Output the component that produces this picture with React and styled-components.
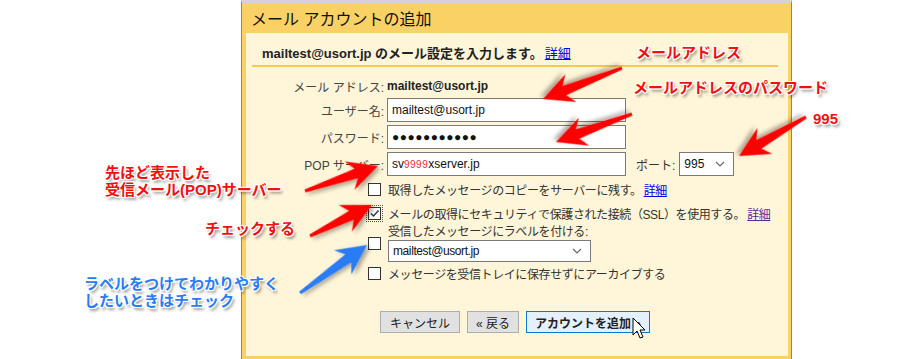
import React from 'react';
import styled, { createGlobalStyle } from 'styled-components';

const Global = createGlobalStyle`
  html, body { margin: 0; padding: 0; background: #fff; }
  body { font-family: "Liberation Sans", "Noto Sans CJK JP", sans-serif; }
`;

const Page = styled.div`
  position: relative;
  width: 924px;
  height: 359px;
  overflow: hidden;
  background: #fff;
`;

const Panel = styled.div`
  margin-left: 241px;
  width: 551px;
  height: 359px;
  box-sizing: border-box;
  border-left: 1px solid #8d8a62;
  border-right: 1px solid #8d8a62;
  border-top: 3px solid #d4d4d4;
  background: #f9d165;
  padding: 0 3px 3px 4px;
  display: flex;
  flex-direction: column;
`;

const Header = styled.div`
  height: 30px;
  display: flex;
  align-items: center;
  padding-left: 5px;
  font-size: 16px;
  color: #111;
`;

const Body = styled.div`
  flex: 1;
  background: #fff5d8;
  padding: 0 8px 0 6px;
`;

const Intro = styled.div`
  padding: 10px 0 0 10px;
  height: 22px;
  font-size: 13px;
  font-weight: bold;
  color: #222;
`;

const Link = styled.a`
  color: ${p => (p.$visited ? '#5b2a9a' : '#0000ee')};
  text-decoration: underline;
  font-weight: normal;
  margin-left: 2px;
  cursor: pointer;
`;

const Divider = styled.div`
  height: 2px;
  background: #f5c852;
  margin-right: 2px;
`;

const Form = styled.div`
  display: grid;
  grid-template-columns: 132px 1fr;
  column-gap: 3px;
  row-gap: 3px;
  margin-top: 10px;
  font-size: 12px;
  color: #333;
`;

const Label = styled.div`
  text-align: right;
  align-self: center;
  color: #444;
`;

const Value = styled.div`
  font-weight: bold;
  height: 18px;
  line-height: 18px;
  color: #222;
`;

const Field = styled.div`
  display: flex;
  align-items: center;
`;

const PortLabel = styled.span`
  margin: 0 4px 0 10px;
`;

const Input = styled.div`
  width: 239px;
  height: 24px;
  box-sizing: border-box;
  border: 1px solid #7a7a7a;
  background: #fff;
  display: flex;
  align-items: center;
  padding-left: 4px;
  font-size: 12px;
  color: #111;
  letter-spacing: ${p => (p.$dots ? '0.5px' : '0')};
`;

const Red = styled.span`
  color: #e8283a;
  font-size: 10px;
  letter-spacing: 0.5px;
`;

const Select = styled.div`
  width: ${p => p.$w}px;
  height: ${p => p.$h || 24}px;
  box-sizing: border-box;
  border: 1px solid #7a7a7a;
  background: #fff;
  display: flex;
  align-items: center;
  justify-content: space-between;
  padding: 0 8px 0 4px;
  font-size: 12px;
  color: #111;
`;

const Checks = styled.div`
  margin: 4px 0 0 116px;
  display: flex;
  flex-direction: column;
  font-size: 12px;
  color: #333;
  white-space: nowrap;
  letter-spacing: -0.4px;
`;

const CheckRow = styled.div`
  display: flex;
  align-items: center;
  gap: 7px;
  min-height: 18px;
  margin-top: ${p => p.$mt || 0}px;
`;

const Box = styled.span`
  flex: none;
  width: 13px;
  height: 13px;
  box-sizing: border-box;
  border: 1px solid #333;
  background: #fff;
  display: flex;
  align-items: center;
  justify-content: center;
  outline: ${p => (p.$checked ? '1px dotted #555' : 'none')};
  outline-offset: 1px;
`;

const Stack = styled.div`
  display: flex;
  flex-direction: column;
  line-height: 15px;
`;

const Buttons = styled.div`
  display: flex;
  gap: 7px;
  margin: 29px 0 0 128px;
`;

const Button = styled.div`
  height: 22px;
  box-sizing: border-box;
  padding: 0 ${p => p.$px || 10}px;
  display: flex;
  align-items: center;
  font-size: 12px;
  color: #222;
  border: 1px solid ${p => (p.$primary ? '#0a78d4' : '#adadad')};
  background: ${p => (p.$primary ? '#e4f0fb' : '#e1e1e1')};
  font-weight: ${p => (p.$primary ? 'bold' : 'normal')};
`;

const Note = styled.div`
  position: absolute;
  left: ${p => p.$x}px;
  top: ${p => p.$y}px;
  font-size: 15px;
  font-weight: bold;
  line-height: 17px;
  white-space: nowrap;
  color: ${p => (p.$blue ? '#2a7cf5' : '#f01010')};
  text-shadow: 1px 0 0 #fff, -1px 0 0 #fff, 0 1px 0 #fff, 0 -1px 0 #fff,
    1px 1px 0 #fff, -1px -1px 0 #fff, 1px -1px 0 #fff, -1px 1px 0 #fff,
    2px 3px 3px rgba(0, 0, 0, 0.45);
`;

const Overlay = styled.svg`
  position: absolute;
  left: 0;
  top: 0;
  width: 924px;
  height: 359px;
  pointer-events: none;
`;

const Chevron = () => (
  <svg width="10" height="6" viewBox="0 0 10 6">
    <path d="M1 1l4 4 4-4" fill="none" stroke="#666" strokeWidth="1.2" />
  </svg>
);

const Check = () => (
  <svg width="11" height="11" viewBox="0 0 11 11">
    <path d="M2 5.5l2.5 2.5L9.5 2.5" fill="none" stroke="#333" strokeWidth="1.4" />
  </svg>
);

// tapered arrow from tail (x1,y1) to tip (x2,y2)
const Arrow = ({ x1, y1, x2, y2, color }) => {
  const L = Math.hypot(x2 - x1, y2 - y1);
  const a = (Math.atan2(y2 - y1, x2 - x1) * 180) / Math.PI;
  const h = 30;
  const pts = [
    [0, -1.5], [L - h + 7, -5], [L - h, -15], [L, 0],
    [L - h, 15], [L - h + 7, 5], [0, 1.5],
  ].map(p => p.join(',')).join(' ');
  return (
    <polygon
      points={pts}
      fill={color}
      transform={`translate(${x1} ${y1}) rotate(${a})`}
      filter="url(#shadow)"
    />
  );
};

const arrows = [
  { x1: 622, y1: 68, x2: 543, y2: 99, color: '#ff0000' },
  { x1: 632, y1: 114, x2: 556, y2: 142, color: '#ff0000' },
  { x1: 806, y1: 117, x2: 739, y2: 156, color: '#ff0000' },
  { x1: 305, y1: 191, x2: 378, y2: 166, color: '#ff0000' },
  { x1: 310, y1: 236, x2: 372, y2: 205, color: '#ff0000' },
  { x1: 300, y1: 293, x2: 367, y2: 245, color: '#2a7cf5' },
];

export default function App() {
  return (
    <Page>
      <Global />
      <Panel>
        <Header>メール アカウントの追加</Header>
        <Body>
          <Intro>
            mailtest@usort.jp のメール設定を入力します。<Link>詳細</Link>
          </Intro>
          <Divider />
          <Form>
            <Label>メール アドレス:</Label>
            <Value>mailtest@usort.jp</Value>
            <Label>ユーザー名:</Label>
            <Input>mailtest@usort.jp</Input>
            <Label>パスワード:</Label>
            <Input $dots>●●●●●●●●●●●</Input>
            <Label>POP サーバー:</Label>
            <Field>
              <Input>
                sv<Red>9999</Red>xserver.jp
              </Input>
              <PortLabel>ポート:</PortLabel>
              <Select $w={55}>
                995 <Chevron />
              </Select>
            </Field>
          </Form>
          <Checks>
            <CheckRow>
              <Box />
              <span>
                取得したメッセージのコピーをサーバーに残す。<Link>詳細</Link>
              </span>
            </CheckRow>
            <CheckRow $mt={6}>
              <Box $checked>
                <Check />
              </Box>
              <span>
                メールの取得にセキュリティで保護された接続（SSL）を使用する。<Link $visited>詳細</Link>
              </span>
            </CheckRow>
            <CheckRow $mt={3}>
              <Box />
              <Stack>
                <span>受信したメッセージにラベルを付ける:</span>
                <Select $w={203} $h={22}>
                  mailtest@usort.jp <Chevron />
                </Select>
              </Stack>
            </CheckRow>
            <CheckRow $mt={2}>
              <Box />
              <span>メッセージを受信トレイに保存せずにアーカイブする</span>
            </CheckRow>
          </Checks>
          <Buttons>
            <Button $px={9}>キャンセル</Button>
            <Button $px={8}>« 戻る</Button>
            <Button $primary $px={8}>アカウントを追加 »</Button>
          </Buttons>
        </Body>
      </Panel>

      <Note $x={636} $y={44}>メールアドレス</Note>
      <Note $x={633} $y={79}>メールアドレスのパスワード</Note>
      <Note $x={813} $y={110}>995</Note>
      <Note $x={105} $y={164}>
        先ほど表示した
        <br />
        受信メール(POP)サーバー
      </Note>
      <Note $x={205} $y={220}>チェックする</Note>
      <Note $x={84} $y={275} $blue>
        ラベルをつけてわかりやすく
        <br />
        したいときはチェック
      </Note>

      <Overlay viewBox="0 0 924 359">
        <defs>
          <filter id="shadow" x="-20%" y="-20%" width="140%" height="160%">
            <feDropShadow dx="2" dy="3" stdDeviation="2" floodColor="#000" floodOpacity="0.35" />
          </filter>
        </defs>
        {arrows.map((a, i) => (
          <Arrow key={i} {...a} />
        ))}
        <path
          d="M633 318 L633 335 L637 331 L640 338 L643 337 L640 330 L645 330 Z"
          fill="#fff"
          stroke="#000"
          strokeWidth="1"
        />
      </Overlay>
    </Page>
  );
}
